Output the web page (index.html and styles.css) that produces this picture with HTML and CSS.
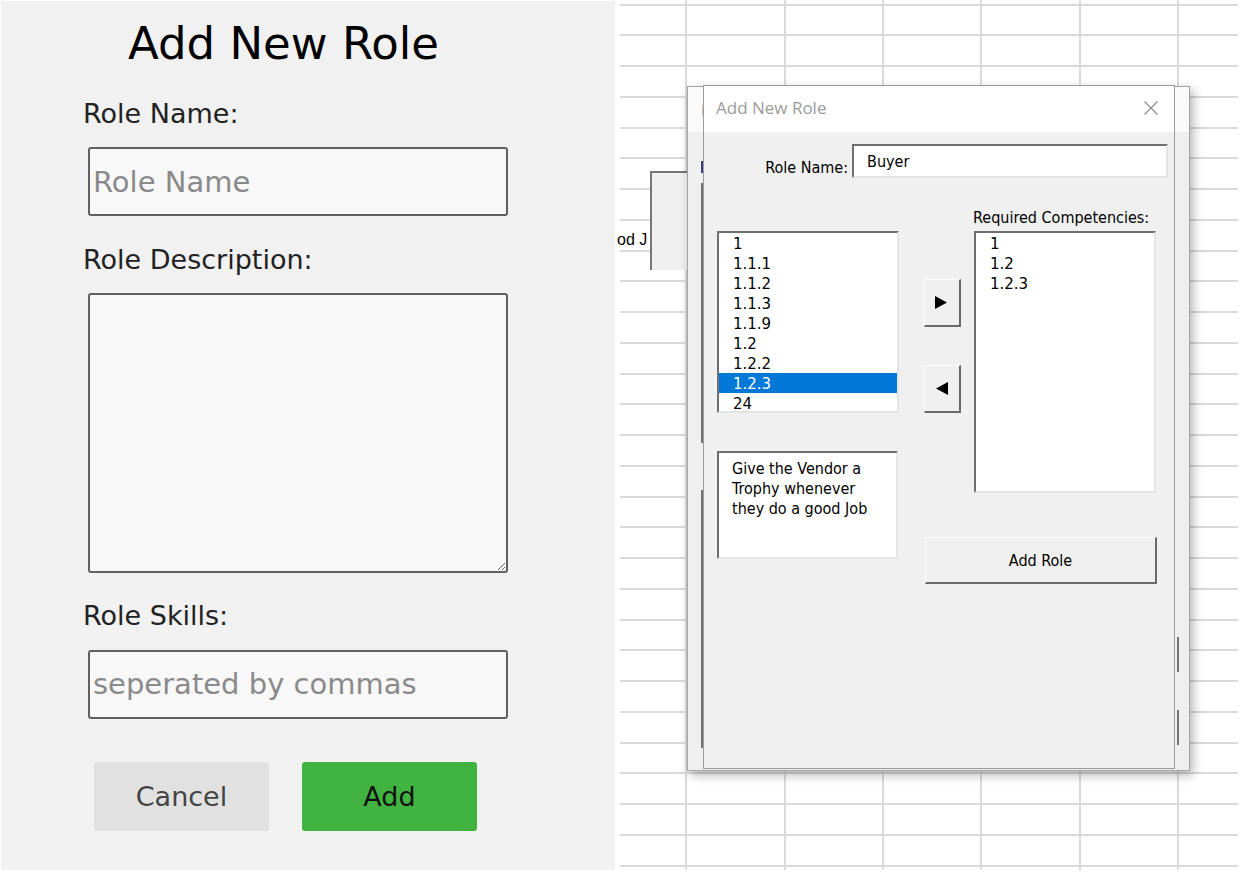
FILE: index.html
```html
<!DOCTYPE html>
<html lang="en">
<head>
<meta charset="utf-8">
<title>Add New Role</title>
<link rel="stylesheet" href="styles.css">
</head>
<body>
<div class="page">
  <section class="web-form">
    <h1 class="wf-title">Add New Role</h1>
    <label class="wf-label">Role Name:</label>
    <input class="wf-field" type="text" placeholder="Role Name">
    <label class="wf-label">Role Description:</label>
    <textarea class="wf-field wf-textarea"></textarea>
    <label class="wf-label">Role Skills:</label>
    <input class="wf-field" type="text" placeholder="seperated by commas">
    <div class="wf-actions">
      <button class="wf-btn wf-cancel">Cancel</button>
      <button class="wf-btn wf-add">Add</button>
    </div>
  </section>

  <section class="sheet">
    <div class="cell-text">od J</div>
    <div class="xl-shape"></div>

    <div class="back-form">
      <span class="bf-mark bf-title-mark"></span>
      <span class="bf-mark bf-f-mark"></span>
      <span class="bf-mark bf-left1"></span>
      <span class="bf-mark bf-left2"></span>
      <span class="bf-mark bf-right1"></span>
      <span class="bf-mark bf-right2"></span>
    </div>

    <div class="dialog">
      <div class="dlg-titlebar">
        <span class="dlg-title">Add New Role</span>
        <svg class="dlg-close" width="16" height="16" viewBox="0 0 16 16"><path d="M1.5 1.5 L14.5 14.5 M14.5 1.5 L1.5 14.5" stroke="#8e8e8e" stroke-width="1.2" fill="none"/></svg>
      </div>
      <div class="dlg-body">
        <div class="dlg-row">
          <span class="vba-label name-label">Role Name:</span>
          <div class="vba-text name-box">Buyer</div>
        </div>
        <div class="dlg-cols">
          <div class="col-left">
            <ul class="vba-list list-all">
              <li>1</li>
              <li>1.1.1</li>
              <li>1.1.2</li>
              <li>1.1.3</li>
              <li>1.1.9</li>
              <li>1.2</li>
              <li>1.2.2</li>
              <li class="sel">1.2.3</li>
              <li>24</li>
            </ul>
            <div class="vba-text desc-box">Give the Vendor a<br>Trophy whenever<br>they do a good Job</div>
          </div>
          <div class="col-group">
            <div class="pick-row">
              <div class="col-mid">
                <button class="vba-btn arrow-btn arrow-add"><svg width="12" height="13" viewBox="0 0 12 13"><polygon points="0,0 12,6.5 0,13" fill="#000"/></svg></button>
                <button class="vba-btn arrow-btn arrow-remove"><svg width="12" height="13" viewBox="0 0 12 13"><polygon points="12,0 0,6.5 12,13" fill="#000"/></svg></button>
              </div>
              <div class="col-right">
                <span class="vba-label req-label">Required Competencies:</span>
                <ul class="vba-list list-req">
                  <li>1</li>
                  <li>1.2</li>
                  <li>1.2.3</li>
                </ul>
              </div>
            </div>
            <button class="vba-btn add-role">Add Role</button>
          </div>
        </div>
      </div>
    </div>
  </section>
</div>
</body>
</html>
```

FILE: styles.css
```css
* { box-sizing: border-box; }

html, body {
  margin: 0;
  padding: 0;
}

body {
  width: 1245px;
  height: 879px;
  background: #fff;
  overflow: hidden;
  font-family: "DejaVu Sans", sans-serif;
}

.page {
  display: flex;
  align-items: flex-start;
}

/* ---------- left: web form ---------- */
.web-form {
  flex: none;
  width: 614px;
  height: 869px;
  margin: 1px 0 0 1px;
  background: #f1f1f1;
  padding: 17.4px 0 0 82px;
  display: flex;
  flex-direction: column;
  align-items: flex-start;
}

.wf-title {
  margin: 0 0 0 45px;
  font-size: 45px;
  line-height: 52px;
  font-weight: normal;
  color: #000;
}

.wf-label {
  display: block;
  margin-top: 27.4px;
  font-size: 27px;
  line-height: 32px;
  color: #222;
}

.wf-field {
  display: block;
  margin: 17.4px 0 0 5px;
  width: 420px;
  height: 69px;
  border: 2px solid #606060;
  border-radius: 3px;
  background: #f8f8f8;
  padding: 0 2px 0 3px;
  font-family: "DejaVu Sans", sans-serif;
  font-size: 29px;
  color: #333;
  outline: none;
}

.wf-field::placeholder { color: #8a8a8a; }

.wf-textarea {
  height: 280px;
  resize: both;
}

.wf-actions {
  display: flex;
  gap: 33px;
  margin: 43px 0 0 11px;
}

.wf-btn {
  width: 175px;
  height: 69px;
  border: none;
  border-radius: 3px;
  padding: 0;
  font-family: "DejaVu Sans", sans-serif;
  font-size: 27px;
}

.wf-cancel { background: #e1e1e1; color: #444; }
.wf-add { background: #40b340; color: #111; }

/* ---------- right: spreadsheet ---------- */
.sheet {
  flex: none;
  position: relative;
  width: 630px;
  height: 870px;
  overflow: hidden;
  background-color: #fff;
  background-image:
    linear-gradient(to right, #fff 0 5px, transparent 5px),
    linear-gradient(to left, #fff 0 7px, transparent 7px),
    repeating-linear-gradient(to right, transparent 0 70.5px, #dadada 70.5px 72.5px, transparent 72.5px 98.25px),
    repeating-linear-gradient(to bottom, transparent 0 3.5px, #dadada 3.5px 5.5px, transparent 5.5px 30.75px);
  background-repeat: no-repeat;
}

.cell-text {
  position: absolute;
  left: 2px;
  top: 229.5px;
  font-family: "Liberation Sans", sans-serif;
  font-size: 16px;
  line-height: 20px;
  color: #000;
  white-space: nowrap;
}

.xl-shape {
  position: absolute;
  left: 35px;
  top: 171px;
  width: 60px;
  height: 99px;
  background: #f0f0f0;
  border-top: 2px solid #777;
  border-left: 2px solid #777;
}

.back-form {
  position: absolute;
  left: 72px;
  top: 86px;
  width: 503px;
  height: 685px;
  border: 1px solid #a3a3a3;
  background: linear-gradient(#fafafa 0 45px, #efefef 45px);
  box-shadow: 3px 4px 10px rgba(0, 0, 0, 0.3);
}

.bf-mark {
  position: absolute;
  width: 2px;
  background: #727272;
}

.bf-title-mark { left: 14px; top: 18px; height: 11px; background: #cfc4b8; }
.bf-f-mark { left: 13px; top: 74px; height: 12px; background: #3d3d7a; }
.bf-left1 { left: 13px; top: 96px; height: 260px; }
.bf-left2 { left: 13px; top: 403px; height: 258px; }
.bf-right1 { left: 489px; top: 550px; height: 35px; }
.bf-right2 { left: 489px; top: 623px; height: 35px; }

/* ---------- VBA dialog ---------- */
.dialog {
  position: absolute;
  left: 88px;
  top: 85px;
  width: 472px;
  height: 684px;
  border: 1px solid #9c9c9c;
  background: #f0f0f0;
  display: flex;
  flex-direction: column;
}

.dlg-titlebar {
  flex: none;
  height: 46px;
  background: #fff;
  display: flex;
  align-items: flex-start;
  padding: 0 15px 0 12px;
}

.dlg-title {
  font-family: "Open Sans", sans-serif;
  font-size: 17px;
  line-height: 43px;
  color: #9b9b9b;
}

.dlg-close {
  margin-left: auto;
  margin-top: 14px;
}

.dlg-body {
  flex: 1;
  padding: 12px 0 0 13px;
  font-family: "DejaVu Sans Condensed", "Liberation Sans", sans-serif;
  font-size: 16px;
  color: #000;
}

.dlg-row {
  display: flex;
  align-items: flex-end;
}

.vba-label {
  display: block;
  line-height: 20px;
  white-space: nowrap;
}

.name-label {
  width: 131px;
  margin-right: 4px;
  text-align: right;
}

.vba-text {
  background: #fff;
  border-style: solid;
  border-width: 2px;
  border-color: #6f6f6f #e4e4e4 #e4e4e4 #6f6f6f;
  line-height: 20px;
}

.name-box {
  width: 316px;
  height: 34px;
  padding: 5.5px 0 0 13px;
}

.dlg-cols {
  display: flex;
  align-items: flex-start;
  margin-top: 29.5px;
}

.col-left {
  width: 182px;
  display: flex;
  flex-direction: column;
}

.vba-list {
  list-style: none;
  margin: 0;
  padding: 0;
  background: #fff;
  border-style: solid;
  border-width: 2px;
  border-color: #6f6f6f #e4e4e4 #e4e4e4 #6f6f6f;
  overflow: hidden;
  font-family: "DejaVu Sans", sans-serif;
  font-size: 15px;
}

.vba-list li {
  height: 20px;
  line-height: 22px;
  padding-left: 14px;
  white-space: nowrap;
}

.vba-list li.sel {
  background: #0078d7;
  color: #fff;
}

.list-all {
  margin-top: 23.5px;
  height: 182px;
}

.desc-box {
  margin-top: 38px;
  width: 181px;
  height: 108px;
  padding: 5.5px 0 0 13px;
}

.col-group {
  margin-left: 25px;
  display: flex;
  flex-direction: column;
}

.pick-row {
  display: flex;
  align-items: flex-start;
}

.col-mid {
  width: 37px;
  display: flex;
  flex-direction: column;
  gap: 38px;
  padding-top: 71.5px;
}

.col-right {
  margin-left: 13px;
  width: 182px;
  display: flex;
  flex-direction: column;
}

.req-label { margin-left: -1px; }

.list-req {
  margin-top: 3.5px;
  height: 262px;
}

.vba-btn {
  display: flex;
  align-items: center;
  justify-content: center;
  margin: 0;
  padding: 0;
  background: #f0f0f0;
  border-style: solid;
  border-width: 1px 2px 2px 1px;
  border-color: #fdfdfd #6a6a6a #6a6a6a #fdfdfd;
  font-family: "DejaVu Sans Condensed", "Liberation Sans", sans-serif;
  font-size: 16px;
  color: #000;
}

.arrow-btn {
  width: 37px;
  height: 48px;
}

.arrow-add svg { margin-right: 3px; }
.arrow-remove svg { margin-right: 1px; }

.add-role {
  margin: 44px 0 0 1px;
  width: 232px;
  height: 47px;
}
```
